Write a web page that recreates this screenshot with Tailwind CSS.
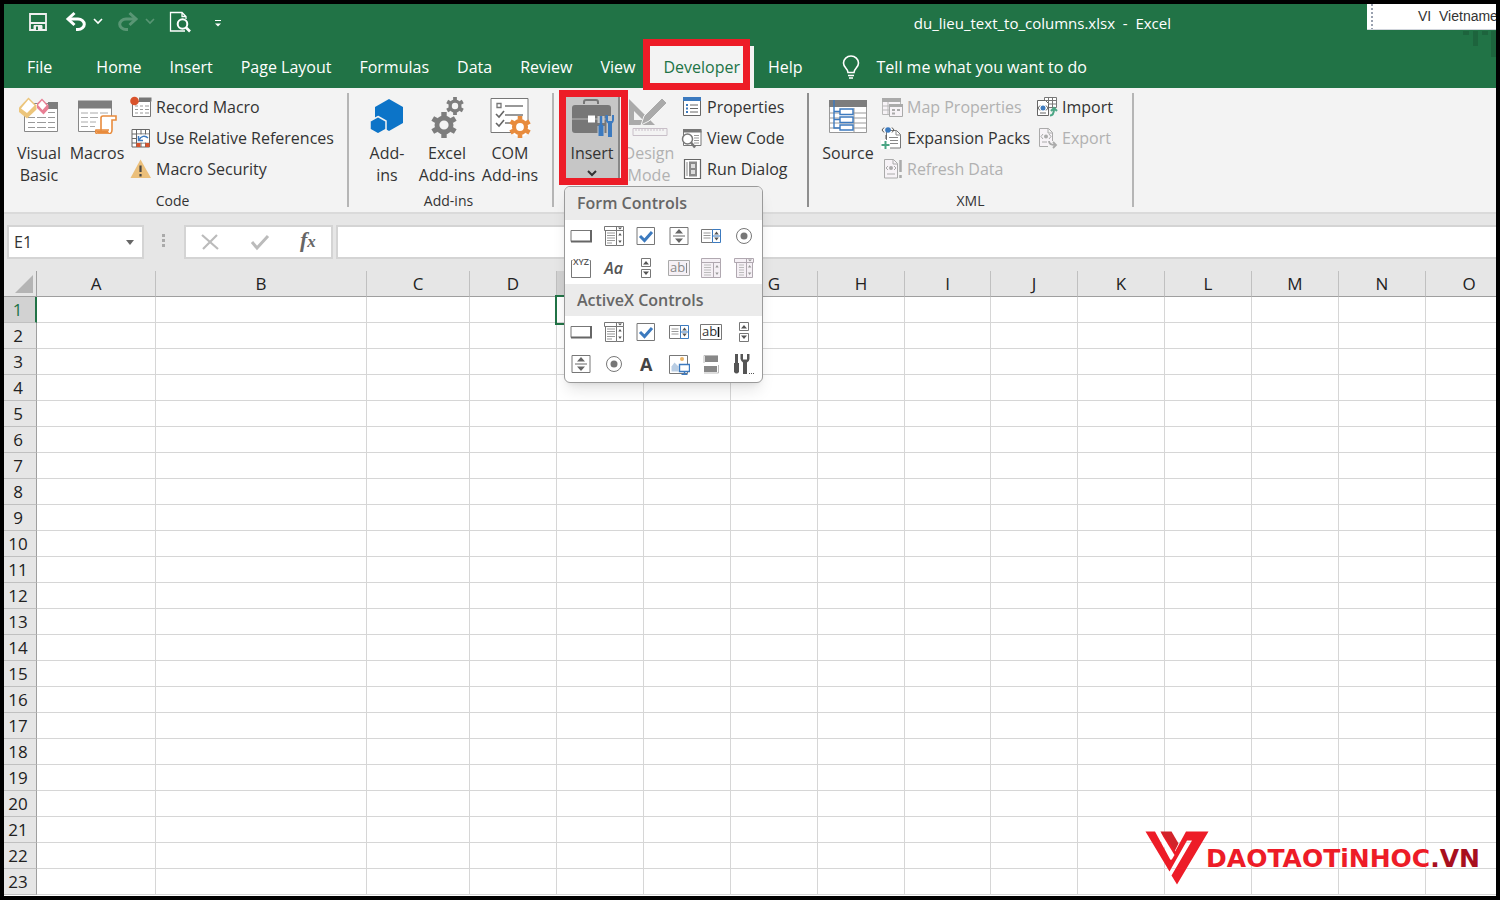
<!DOCTYPE html>
<html lang="en">

<head>
    <meta charset="UTF-8" />
    <meta name="viewport" content="width=device-width, initial-scale=1.0" />
    <title>du_lieu_text_to_columns.xlsx - Excel</title>
    <script src="https://cdn.jsdelivr.net/npm/@tailwindcss/browser@4"></script>
</head>

<body class="flex h-screen flex-col overflow-hidden border-4 border-black bg-white font-['Open_Sans','Noto_Sans',sans-serif] text-[16px] text-[#333]">

    <!-- Shared icons for the controls menu -->
    <svg class="hidden" aria-hidden="true">
        <symbol id="i-button" viewBox="0 0 22 22">
            <path d="M1 5.5h19.500v11H1z" fill="#fff" stroke="#777" />
            <path d="M1 16.500h20V5" fill="none" stroke="#666" stroke-width="2" />
        </symbol>
        <symbol id="i-combo" viewBox="0 0 22 22">
            <path d="M2.500 5.500h11v15h-11z" fill="#fff" stroke="#777" />
            <path d="M1.500 1.500h19v4h-19z" fill="#fff" stroke="#777" />
            <path d="M13.500 5.500h7v15h-7zM13.500 1.500v4" fill="#fff" stroke="#777" />
            <path d="M4 8h8M4 10.500h8M4 13h8M4 15.500h8M4 18h5" stroke="#999" />
            <path d="M15 2.500h4l-2 2zM15.300 10.500h3.400L17 8zM15.300 15.500h3.400L17 18z" fill="#555" />
        </symbol>
        <symbol id="i-check" viewBox="0 0 22 22">
            <path d="M2 2.500h17.500v17H2z" fill="#fff" stroke="#777" />
            <path d="M5 11l4.500 4.500L17 7" fill="none" stroke="#3c7abf" stroke-width="3" />
        </symbol>
        <symbol id="i-spin" viewBox="0 0 22 22">
            <path d="M2 2.500h18v17H2z" fill="#fff" stroke="#777" />
            <path d="M5 11h12" stroke="#666" />
            <path d="M7 8.500h8l-4-4.500zM7 13.500h8l-4 4.500z" fill="#666" />
        </symbol>
        <symbol id="i-list" viewBox="0 0 22 22">
            <path d="M1.500 4.500h12v13h-12z" fill="#fff" stroke="#777" />
            <path d="M3.500 8h7M3.500 10.500h7M3.500 13h7" stroke="#999" />
            <path d="M12.500 4.500h8v13h-8zM12.500 11h8" fill="#fff" stroke="#3c7abf" />
            <path d="M14.200 9.500h4.600L16.500 6.500zM14.200 12.500h4.600L16.500 15.500z" fill="#555" />
        </symbol>
        <symbol id="i-radio" viewBox="0 0 22 22">
            <circle cx="11" cy="11" r="7.500" fill="#fff" stroke="#777" />
            <circle cx="11" cy="11" r="3.500" fill="#777" />
        </symbol>
        <symbol id="i-scroll" viewBox="0 0 22 22">
            <path d="M6.500 1.500h9v8h-9zM6.500 12.500h9v8h-9z" fill="#fff" stroke="#777" />
            <path d="M8 7.500h6L11 4zM8 14.500h6L11 18z" fill="#555" />
        </symbol>
        <symbol id="i-gear" viewBox="-12 -12 24 24">
            <circle r="6.500" fill="none" stroke="currentColor" stroke-width="4.500" />
            <path d="M0-12v4M0 12v-4M-10.400-6l3.500 2M10.400-6l-3.500 2M-10.400 6l3.500-2M10.400 6l-3.500-2" stroke="currentColor" stroke-width="5" />
        </symbol>
    </svg>

    <!-- Title bar and tabs -->
    <header class="relative shrink-0 bg-[#217346] text-white">
        <svg class="absolute top-[27px] right-0 h-[27px] w-9" viewBox="0 0 36 27" fill="#1d643d">
            <path d="M3 0h6v4H3zM13 0h5v15h-5zM22 0h6v4h-6zM31 0h5v26h-5z" />
        </svg>
        <div class="flex h-[42px] items-start">
            <div class="flex h-9 items-center pl-6">
                <button aria-label="Save">
                    <svg class="h-5 w-5" viewBox="0 0 20 20" fill="none" stroke="#f0f0f0" stroke-width="1.800">
                        <path d="M2 2h16v16H2zM2 11h16" />
                        <path d="M6 13.500h8V18H6z" fill="#f0f0f0" stroke-width="1" />
                        <path d="M8 14.500v3.500h2v-3.500z" fill="#217346" stroke="none" />
                    </svg>
                </button>
                <button class="ml-4 flex items-center gap-1" aria-label="Undo">
                    <svg class="h-6 w-6" viewBox="0 0 24 24" fill="none" stroke="#fff" stroke-width="3">
                        <path d="M4 9h10a6 5 0 0 1 0 10.500h-2" />
                        <path d="M10.500 3L4 9l6.500 6" />
                    </svg>
                    <svg class="h-2 w-3" viewBox="0 0 12 8" fill="none" stroke="#fff" stroke-width="1.600"><path d="M2 1l4 4 4-4" /></svg>
                </button>
                <button class="ml-3 flex items-center gap-1 opacity-25" aria-label="Redo" disabled>
                    <svg class="h-6 w-6" viewBox="0 0 24 24" fill="none" stroke="#fff" stroke-width="3">
                        <path d="M20 9H10a6 5 0 0 0 0 10.500h2" />
                        <path d="M13.500 3L20 9l-6.500 6" />
                    </svg>
                    <svg class="h-2 w-3" viewBox="0 0 12 8" fill="none" stroke="#fff" stroke-width="1.600"><path d="M2 1l4 4 4-4" /></svg>
                </button>
                <button class="ml-3" aria-label="Print Preview">
                    <svg class="h-6 w-6" viewBox="0 0 24 24" fill="none" stroke="#fff" stroke-width="1.300">
                        <path d="M17 21H2.500V2.500H14l4 4V9M14 2.500v4h4" />
                        <circle cx="14.500" cy="14" r="4.800" fill="#217346" stroke-width="2" />
                        <path d="M18 17.500l4 4" stroke-width="2.600" />
                    </svg>
                </button>
                <button class="ml-5" aria-label="Customize Quick Access Toolbar">
                    <svg class="h-3 w-3" viewBox="0 0 12 12"><path d="M3 4.500h6" stroke="#fff" /><path d="M3 7.500h6L6 10.500z" fill="#fff" /></svg>
                </button>
            </div>
            <h1 class="mr-[196px] ml-auto flex h-[38px] items-center text-[15px] whitespace-pre">du_lieu_text_to_columns.xlsx  -  Excel</h1>
            <div class="z-10 flex h-[26px] w-[129px] shrink-0 items-center overflow-hidden border-b border-gray-300 bg-white font-['Liberation_Sans',sans-serif] text-[14px] whitespace-pre text-[#333]">
                <span class="ml-1 h-[26px] border-l-2 border-dotted border-gray-400"></span>
                <span class="ml-[45px]">VI  Vietname</span>
            </div>
        </div>
        <nav class="flex h-[42px] pl-[9px]">
            <button class="mr-4 px-[14px]">File</button>
            <button class="px-[14px]">Home</button>
            <button class="px-[14px]">Insert</button>
            <button class="px-[14px]">Page Layout</button>
            <button class="px-[14px]">Formulas</button>
            <button class="px-[14px]">Data</button>
            <button class="px-[14px]">Review</button>
            <button class="px-[14px]">View</button>
            <button class="relative bg-[#f3f3f3] px-[14px] text-[#217346]">Developer
                <span class="absolute -top-[7px] right-1 -left-[6px] h-[51px] border-[7px] border-[#ed1c27]"></span>
            </button>
            <button class="px-[14px]">Help</button>
            <button class="ml-6 flex items-center gap-4">
                <svg class="h-6 w-5" viewBox="0 0 20 24" fill="none" stroke="#fff" stroke-width="1.600">
                    <path d="M7 17.500c0-4-4.500-4.500-4.500-9.500a7.500 7 0 0 1 15 0c0 5-4.500 5.500-4.500 9.500zM7 20.500h6M8 23h4" />
                </svg>
                Tell me what you want to do
            </button>
        </nav>
    </header>

    <!-- Ribbon -->
    <section class="flex h-[126px] shrink-0 border-b-2 border-[#dadada] bg-[#f3f3f3] pt-[5px] pb-[5px] leading-[22px]">
        <div class="flex w-[345px] flex-col border-r-2 border-[#b5b5b5]">
            <div class="flex h-[101px] shrink-0 pl-[5px]">
                <button class="flex w-[60px] flex-col items-center justify-start pt-1">
                    <svg class="mb-2 h-[37px] w-[42px] shrink-0" viewBox="0 0 42 37">
                        <path d="M6.500 6.500h33v28h-33z" fill="#fff" stroke="#888" />
                        <path d="M30 5h10v7H30z" fill="#7d7d7d" />
                        <path d="M10 20.500h7m2 0h9m2 0h7M10 25.500h7m2 0h9m2 0h7M10 30.500h7m2 0h9m2 0h7M30 15.500h7" stroke="#999" />
                        <path d="M1 10.500L10.500.500 18.500 8.500v4L9 21.500 1 15z" fill="#ecc57b" />
                        <path d="M10.500 2.500l6 6L9 16l-6-4.500z" fill="#fff" />
                        <path d="M19 6.500L24 1.500l6.500 7v3.500L25.500 17.500 19 11z" fill="#e87f94" />
                        <path d="M24 3.500l4.500 5-4 4.500-4.500-5z" fill="#fff" />
                    </svg>
                    Visual<br>Basic
                </button>
                <button class="flex w-[56px] flex-col items-center justify-start pt-1">
                    <svg class="mb-2 h-[37px] w-[42px] shrink-0" viewBox="0 0 42 37">
                        <path d="M2.500 5.500h33v29h-33z" fill="#fff" stroke="#888" />
                        <path d="M2 3.500h34v8H2z" fill="#7d7d7d" />
                        <path d="M5 16h7m2 0h8m2 0h8M5 20.500h7m2 0h8M5 25h7m2 0h6M5 29.500h7m2 0h5" stroke="#aaa" />
                        <path d="M25 34V21q0-2 2-2h13v4h-4v10q0 4-4 4H22q-3 0-2-4h13" fill="#fff" stroke="#e88b3c" stroke-width="1.600" />
                        <path d="M20 33.500h12q0 2 2 3H22q-2-1-2-3z" fill="#e88b3c" />
                    </svg>
                    Macros
                </button>
                <div class="ml-[5px] flex flex-col items-start">
                    <button class="flex h-[31px] items-center gap-1 pb-1">
                        <svg class="h-[22px] w-[22px]" viewBox="0 0 22 22">
                            <path d="M2.500 5.500h18v15h-18z" fill="#fff" stroke="#777" />
                            <path d="M9 1.500h12.500v4H9z" fill="#777" />
                            <path d="M5 10h3m2 0h3m2 0h4M5 13.500h3m2 0h3m2 0h4M5 17h3m2 0h3m2 0h4" stroke="#999" />
                            <circle cx="4.500" cy="5" r="4.300" fill="#d9532c" />
                        </svg>
                        Record Macro
                    </button>
                    <button class="flex h-[31px] items-center gap-1 pb-1">
                        <svg class="h-[22px] w-[22px]" viewBox="0 0 22 22">
                            <path d="M2 2.500h17.500v17.500H2zM2 7h17.500M2 11.500h17.500M2 16h17.500M6.500 2v18M11 2v18M15.500 2v18" fill="#fff" stroke="#666" />
                            <path d="M7 7.500h12v8H7z" fill="#fff" />
                            <path d="M8.500 9v4.500H13M9 13c2-4 6-5 9-2" fill="none" stroke="#3c7abf" stroke-width="1.500" />
                            <path d="M6.500 16h4v4h-4zM15.500 16h4v4h-4z" fill="#d9532c" />
                        </svg>
                        Use Relative References
                    </button>
                    <button class="flex h-[31px] items-center gap-1 pb-1">
                        <svg class="h-[22px] w-[22px]" viewBox="0 0 22 22">
                            <path d="M10.500 1.500L21 20H.500z" fill="#ebbf7a" />
                            <path d="M10.500 7.500v6.500m0 2v2.500" stroke="#444" stroke-width="2.200" />
                        </svg>
                        Macro Security
                    </button>
                </div>
            </div>
            <p class="pr-[6px] text-center text-[14px] leading-[14px]">Code</p>
        </div>

        <div class="flex w-[205px] flex-col border-r-2 border-[#b5b5b5]">
            <div class="flex h-[101px] shrink-0 pl-[5px]">
                <button class="flex w-[66px] flex-col items-center justify-start pt-1">
                    <svg class="mb-2 h-[37px] w-[38px] shrink-0" viewBox="0 0 38 37">
                        <path d="M21 2l14 8v16l-14 8-14-8V10z" fill="#0c74c8" />
                        <path d="M10 19.500l8 4.500v8.500l-8 4.500-8-4.500V24z" fill="#0c74c8" stroke="#f3f3f3" stroke-width="1.500" />
                    </svg>
                    Add-<br>ins
                </button>
                <button class="flex w-[54px] flex-col items-center justify-start pt-1 whitespace-nowrap">
                    <svg class="mb-1 h-[41px] w-[38px] shrink-0 text-[#7d7d7d]" viewBox="0 0 38 41">
                        <use href="#i-gear" x="3" y="15" width="26" height="26" />
                        <use href="#i-gear" x="18" y="0" width="18" height="18" />
                    </svg>
                    Excel<br>Add-ins
                </button>
                <button class="flex w-[72px] flex-col items-center justify-start pt-1 whitespace-nowrap">
                    <svg class="mb-1 h-[41px] w-[42px] shrink-0 text-[#e88b3c]" viewBox="0 0 42 41">
                        <path d="M2 1.500h37v34H2z" fill="#fff" stroke="#777" />
                        <path d="M8 6.500h4v4H8zM16 9h18M16 18h18M16 26h6" fill="none" stroke="#777" stroke-width="1.300" />
                        <path d="M7 17l3 3 5-6M7 26l3 3 5-6" fill="none" stroke="#666" stroke-width="1.600" />
                        <circle cx="31" cy="30" r="10" fill="#fff" />
                        <use href="#i-gear" x="20" y="19" width="22" height="22" />
                    </svg>
                    COM<br>Add-ins
                </button>
            </div>
            <p class="pr-1 text-center text-[14px] leading-[14px]">Add-ins</p>
        </div>

        <div class="flex w-[255px] flex-col border-r-2 border-[#8e8e8e]">
            <div class="flex h-[101px] shrink-0 pl-3">
                <div class="relative z-10">
                    <button class="flex h-[88px] w-[54px] flex-col items-center justify-start border-r-2 border-[#888] bg-[#c6c6c6] pt-1">
                        <svg class="mb-2 h-[41px] w-[44px] shrink-0" viewBox="0 0 44 41">
                            <path d="M14 7V5q0-2 2-2h10q2 0 2 2v2" fill="none" stroke="#777" stroke-width="2" />
                            <rect x="2" y="8" width="39" height="28" rx="3" fill="#777" />
                            <path d="M2 22h39" stroke="#bbb" />
                            <path d="M18 18.500h7v7h-7z" fill="#fff" />
                            <path d="M31 19v7m0 3v11" stroke="#c6c6c6" stroke-width="7" />
                            <path d="M40 19v21" stroke="#c6c6c6" stroke-width="7" />
                            <path d="M31 19v9" stroke="#3c7abf" stroke-width="2.500" />
                            <path d="M31 28v11" stroke="#3c7abf" stroke-width="5" />
                            <path d="M35.500 18v5q1 3 2.500 3.500V40h4V26.500Q43.500 26 44 23v-5h-2v6h-4v-6z" fill="#3c7abf" />
                        </svg>
                        <span class="-mt-1 leading-[22px]">Insert</span>
                        <svg class="mt-[6px] h-[7px] w-[10px] shrink-0" viewBox="0 0 10 7" fill="none" stroke="#333" stroke-width="2"><path d="M1 1l4 4 4-4" /></svg>
                    </button>
                    <span class="absolute -top-[3px] -left-[7px] h-[95px] w-[69px] border-[7px] border-[#ed1c27]"></span>

                    <!-- Controls menu -->
                    <div class="absolute top-[93px] -left-[2px] w-[199px] overflow-hidden rounded-md border border-[#9a9a9a] bg-white pb-[2px] shadow-lg">
                        <h2 class="flex h-[33px] items-center bg-[#ebebeb] pb-[1px] pl-3 text-[16px] font-semibold text-[#666]">Form Controls</h2>
                        <div class="grid auto-rows-[32px] grid-cols-6 place-items-center pr-[2px]">
                            <button aria-label="Button"><svg class="h-[22px] w-[22px]"><use href="#i-button" /></svg></button>
                            <button aria-label="Combo Box"><svg class="h-[22px] w-[22px]"><use href="#i-combo" /></svg></button>
                            <button aria-label="Check Box"><svg class="h-[22px] w-[22px]"><use href="#i-check" /></svg></button>
                            <button aria-label="Spin Button"><svg class="h-[22px] w-[22px]"><use href="#i-spin" /></svg></button>
                            <button aria-label="List Box"><svg class="h-[22px] w-[22px]"><use href="#i-list" /></svg></button>
                            <button aria-label="Option Button"><svg class="h-[22px] w-[22px]"><use href="#i-radio" /></svg></button>
                            <button aria-label="Group Box">
                                <svg class="h-6 w-[22px]" viewBox="0 0 22 24">
                                    <path d="M2.500 4.500h-1v17h19v-17h-1" fill="none" stroke="#777" />
                                    <text x="11" y="9" text-anchor="middle" font-size="9" font-weight="600" fill="#555">XYZ</text>
                                </svg>
                            </button>
                            <button aria-label="Label" class="text-[16px] font-semibold text-[#555] italic">Aa</button>
                            <button aria-label="Scroll Bar"><svg class="h-[22px] w-[22px]"><use href="#i-scroll" /></svg></button>
                            <button aria-label="Text Field" disabled>
                                <svg class="h-[22px] w-[22px]" viewBox="0 0 22 22">
                                    <path d="M.500 3.500h21v15H.500z" fill="#f5f0f5" stroke="#aaa" />
                                    <text x="2" y="15" font-size="13" fill="#888">ab</text>
                                    <path d="M18.500 6v10" stroke="#888" />
                                </svg>
                            </button>
                            <button aria-label="Combo List Edit" disabled>
                                <svg class="h-[22px] w-[22px]" viewBox="0 0 22 22">
                                    <path d="M1.500 1.500h19v19h-19zM1.500 5.500h19M13.500 5.500v15" fill="#f5f0f5" stroke="#b0a8b0" />
                                    <path d="M4 8h7M4 10.500h7M4 13h7M4 15.500h7M4 18h7" stroke="#bbb" />
                                    <path d="M15.300 10.500h3.400L17 8zM15.300 15.500h3.400L17 18z" fill="#999" />
                                </svg>
                            </button>
                            <button aria-label="Combo Drop-Down Edit" disabled>
                                <svg class="h-[22px] w-[22px]" viewBox="0 0 22 22">
                                    <path d="M3.500 5.500h10v15h-10zM13.500 5.500h6v15h-6zM1.500 1.500h19v4h-19zM13.500 1.500v4" fill="#f5f0f5" stroke="#b0a8b0" />
                                    <path d="M6 8h5M6 10.500h5M6 13h5M6 15.500h5M6 18h5" stroke="#bbb" />
                                    <path d="M15 2.500h4l-2 2zM15 10.500h3.400L16.500 8zM15 15.500h3.400L16.500 18z" fill="#999" />
                                </svg>
                            </button>
                        </div>
                        <h2 class="flex h-8 items-center bg-[#ebebeb] pl-3 text-[16px] font-semibold text-[#666]">ActiveX Controls</h2>
                        <div class="grid auto-rows-[32px] grid-cols-6 place-items-center pr-[2px]">
                            <button aria-label="Command Button"><svg class="h-[22px] w-[22px]"><use href="#i-button" /></svg></button>
                            <button aria-label="Combo Box (ActiveX)"><svg class="h-[22px] w-[22px]"><use href="#i-combo" /></svg></button>
                            <button aria-label="Check Box (ActiveX)"><svg class="h-[22px] w-[22px]"><use href="#i-check" /></svg></button>
                            <button aria-label="List Box (ActiveX)"><svg class="h-[22px] w-[22px]"><use href="#i-list" /></svg></button>
                            <button aria-label="Text Box">
                                <svg class="h-[22px] w-[22px]" viewBox="0 0 22 22">
                                    <path d="M.500 3.500h21v15H.500z" fill="#fff" stroke="#777" />
                                    <text x="2" y="15" font-size="13" fill="#333">ab</text>
                                    <path d="M18.500 6v10" stroke="#111" stroke-width="1.500" />
                                </svg>
                            </button>
                            <button aria-label="Scroll Bar (ActiveX)"><svg class="h-[22px] w-[22px]"><use href="#i-scroll" /></svg></button>
                            <button aria-label="Spin Button (ActiveX)"><svg class="h-[22px] w-[22px]"><use href="#i-spin" /></svg></button>
                            <button aria-label="Option Button (ActiveX)"><svg class="h-[22px] w-[22px]"><use href="#i-radio" /></svg></button>
                            <button aria-label="Label (ActiveX)" class="text-[18px] font-bold text-[#444]">A</button>
                            <button aria-label="Image">
                                <svg class="h-[22px] w-[22px]" viewBox="0 0 22 22">
                                    <path d="M1.500 2.500h18v18h-18z" fill="#fff" stroke="#777" />
                                    <path d="M3.500 18.500v-5l3-4 4 4v5z" fill="#b9cde3" />
                                    <circle cx="14" cy="6" r="2" fill="#ecb566" />
                                    <path d="M11.500 11.500h10v7h-10zM16.500 18.500v3M13.500 21.500h6" fill="#fff" stroke="#3c7abf" stroke-width="1.400" />
                                </svg>
                            </button>
                            <button aria-label="Toggle Button">
                                <svg class="h-[22px] w-[22px]" viewBox="0 0 22 22">
                                    <path d="M4 2h14v8H4zM4 12.500h14v8H4z" fill="#fff" />
                                    <path d="M5 3h13v6H5zM4 13h13v6H4z" fill="#888" />
                                    <path d="M4 10V2.500h14M18.500 12v8H4" fill="none" stroke="#bbb" />
                                </svg>
                            </button>
                            <button aria-label="More Controls">
                                <svg class="h-[22px] w-[22px]" viewBox="0 0 22 22" fill="#555">
                                    <path d="M2 1h3v9h1v9q-2.500 3-5 0v-9h1zM7.500 1v5q1 3 2.500 3.500V21h4V9.500Q16 9 16.500 6V1H14v5.500h-4V1z" />
                                    <path d="M16 20h1v1h-1zM18 20h1v1h-1zM20 20h1v1h-1z" />
                                </svg>
                            </button>
                        </div>
                    </div>
                </div>
                <button class="flex w-[58px] flex-col items-center justify-start pt-1 text-[#b1b1b1]" disabled>
                    <svg class="mb-1 h-[41px] w-[42px] shrink-0" viewBox="0 0 42 41">
                        <path d="M1 2v26h26zM6 14l9 9H6z" fill="#aaa" fill-rule="evenodd" />
                        <path d="M13 28l3-9L34 1l5 5-18 18z" fill="#aaa" stroke="#f3f3f3" />
                        <path d="M5 31.500h34v7H5zM8 31v3m3-3v3m3-3v3m3-3v3m3-3v3m3-3v3m3-3v3m3-3v3m3-3v3m3-3v3" fill="none" stroke="#c8bfc8" />
                    </svg>
                    Design<br>Mode
                </button>
                <div class="ml-[3px] flex flex-col items-start">
                    <button class="flex h-[31px] items-center gap-1 pb-1">
                        <svg class="h-[22px] w-[22px]" viewBox="0 0 22 22">
                            <path d="M2.500 2.500h17v17h-17z" fill="#fff" stroke="#666" />
                            <path d="M2 1h18v4H2z" fill="#3c7abf" />
                            <path d="M9 9h8M9 12.500h8M9 16h8" stroke="#666" />
                            <path d="M5 8h2v2H5zM5 11.500h2v2H5zM5 15h2v2H5z" fill="#3c7abf" />
                        </svg>
                        Properties
                    </button>
                    <button class="flex h-[31px] items-center gap-1 pb-1">
                        <svg class="h-[22px] w-[22px]" viewBox="0 0 22 22">
                            <path d="M2.500 3.500h17.500v15H2.500z" fill="#fff" stroke="#777" />
                            <path d="M2 2h18.500v3.500H2z" fill="#777" />
                            <path d="M13 8.500h5M13 11h5M13 13.500h5M13 16h5" stroke="#999" />
                            <circle cx="6.500" cy="12" r="5" fill="#fff" stroke="#777" stroke-width="1.500" />
                            <path d="M10 15.500l4 5" stroke="#777" stroke-width="2.500" />
                        </svg>
                        View Code
                    </button>
                    <button class="flex h-[31px] items-center gap-1 pb-1">
                        <svg class="h-[22px] w-[22px]" viewBox="0 0 22 22">
                            <path d="M3.500 1.500h16v19h-16z" fill="#fff" stroke="#666" stroke-width="1.200" />
                            <path d="M6 4v14" stroke="#888" />
                            <path d="M8 3.500h8v15H8z" fill="#8a8a8a" />
                            <path d="M10 6h4v4h-4zM10 12h4v4h-4z" fill="#ddd" />
                        </svg>
                        Run Dialog
                    </button>
                </div>
            </div>
        </div>

        <div class="flex w-[325px] flex-col border-r-2 border-[#b5b5b5]">
            <div class="flex h-[101px] shrink-0 pl-[9px]">
                <button class="flex w-[60px] flex-col items-center justify-start pt-1">
                    <svg class="mb-2 h-[37px] w-[40px] shrink-0" viewBox="0 0 40 37">
                        <path d="M1.500 4.500h37v31h-37zM1.500 16h37M1.500 21h37M1.500 26h37M1.500 31h37M26 11v24" fill="#fff" stroke="#999" />
                        <path d="M1 3h38v7H1z" fill="#7d7d7d" />
                        <path d="M6 3v28h6M6 14.500h6M6 22.500h6" fill="none" stroke="#3c7abf" stroke-width="1.400" />
                        <path d="M12 12h13v5.500H12zM12 20h13v5.500H12zM12 28h13v5H12z" fill="#fff" stroke="#3c7abf" stroke-width="1.400" />
                    </svg>
                    Source
                </button>
                <div class="ml-[3px] flex flex-col items-start">
                    <button class="flex h-[31px] items-center gap-1 pb-1 text-[#b1b1b1]" disabled>
                        <svg class="h-[22px] w-[22px]" viewBox="0 0 22 22">
                            <path d="M1.500 2.500h18v16h-18zM1.500 10h8M1.500 14h8M7 6v12" fill="#f7f3f7" stroke="#b9b9b9" />
                            <path d="M1 2h19v4H1z" fill="#aaa" />
                            <path d="M8.500 8.500h13v12h-13z" fill="#f7f3f7" stroke="#aaa" />
                            <path d="M8 8h14v3H8zM11 13h3v2h-3zM16 13h3v2h-3zM11 16.500h3v2h-3z" fill="#aaa" />
                        </svg>
                        Map Properties
                    </button>
                    <button class="flex h-[31px] items-center gap-1 pb-1">
                        <svg class="h-[22px] w-[22px]" viewBox="0 0 22 22">
                            <path d="M5.500 21V3.500h10l4 4V21z" fill="#fff" stroke="#777" />
                            <path d="M15 3v5h5M8 10.500h9M8 13.500h9M8 16.500h9" fill="none" stroke="#888" />
                            <path d="M0 13h9v9H0z" fill="#fff" />
                            <path d="M4.500 14v8M.500 18h8" stroke="#4ba584" stroke-width="2" />
                            <circle cx="7" cy="3" r="2.800" fill="#3c7abf" />
                            <path d="M3 .500L1 3l2 2.500M11 .500L13 3l-2 2.500M5 8v4" fill="none" stroke="#555" />
                        </svg>
                        Expansion Packs
                    </button>
                    <button class="flex h-[31px] items-center gap-1 pb-1 text-[#b1b1b1]" disabled>
                        <svg class="h-[22px] w-[22px]" viewBox="0 0 22 22">
                            <path d="M3.500 20V1.500h9l4 4V20z" fill="#f7f3f7" stroke="#aaa" />
                            <path d="M12 1.500V6h4.500M7 8l-2 2 2 2M13 8l2 2-2 2M6 16h8" fill="none" stroke="#aaa" />
                            <circle cx="10" cy="10" r="2" fill="#aaa" />
                            <path d="M19.500 2v12m0 3v3" stroke="#aaa" stroke-width="2.500" />
                        </svg>
                        Refresh Data
                    </button>
                </div>
                <div class="ml-auto flex w-[96px] flex-col items-start">
                    <button class="flex h-[31px] items-center gap-1 pb-1">
                        <svg class="h-[22px] w-[22px]" viewBox="0 0 22 22">
                            <path d="M8.500 1.500h12v10h-12zM8.500 4.500h12M8.500 8h12M12.500 1.500v10M16.500 1.500v10" fill="#fff" stroke="#777" />
                            <path d="M1.500 4.500h8l3 3v12h-11z" fill="#fff" stroke="#666" />
                            <circle cx="7" cy="12" r="2.500" fill="#3c7abf" />
                            <path d="M4 9.500L2 12l2 2.500M10 9.500l2 2.500-2 2.500M4 17h6" fill="none" stroke="#666" />
                            <path d="M14 19.500q4 0 4-7M15 15l3-3 3 3" fill="none" stroke="#4ba584" stroke-width="2" />
                        </svg>
                        Import
                    </button>
                    <button class="flex h-[31px] items-center gap-1 pb-1 text-[#b1b1b1]" disabled>
                        <svg class="h-[22px] w-[22px]" viewBox="0 0 22 22">
                            <path d="M12 19.500H3.500v-18h9l4 4V14M12 1.500V6h4.500" fill="#f7f3f7" stroke="#aaa" />
                            <path d="M7 7L5 9.500 7 12M13 7l2 2.500-2 2.500M6 15h5" fill="none" stroke="#aaa" />
                            <circle cx="10" cy="9.500" r="2" fill="#aaa" />
                            <path d="M13 14q0 4 6 4M17 15l3 3-3 3" fill="none" stroke="#aaa" stroke-width="1.800" />
                        </svg>
                        Export
                    </button>
                </div>
            </div>
            <p class="text-center text-[14px] leading-[14px]">XML</p>
        </div>
    </section>

    <!-- Formula bar -->
    <section class="flex h-[57px] shrink-0 items-start bg-[#e6e6e6] pt-[11px] pl-[3px]">
        <div class="flex h-[34px] w-[137px] items-center border-2 border-[#d4d4d4] bg-white pr-2">
            <input class="w-full min-w-0 pl-[5px] text-[16px] outline-none" aria-label="Name Box" value="E1" />
            <svg class="h-[5px] w-2 shrink-0" viewBox="0 0 8 5"><path d="M0 0h8L4 5z" fill="#666" /></svg>
        </div>
        <svg class="mx-[18px] mt-[9px] h-4 w-1" viewBox="0 0 4 16" fill="#aaa"><path d="M0 0h3v3H0zM0 5h3v3H0zM0 10h3v3H0z" /></svg>
        <div class="flex h-[34px] w-[149px] items-center justify-around border-2 border-[#d4d4d4] bg-white">
            <button aria-label="Cancel"><svg class="h-[18px] w-[18px]" viewBox="0 0 18 18" stroke="#bbb" stroke-width="2.200"><path d="M1 2l16 14M16 2L2 16" /></svg></button>
            <button aria-label="Enter"><svg class="h-[18px] w-[20px]" viewBox="0 0 20 18" fill="none" stroke="#bbb" stroke-width="3"><path d="M2 9l5 6L18 3" /></svg></button>
            <button aria-label="Insert Function" class="pb-1 font-['Liberation_Serif',serif] text-[22px] leading-none font-bold text-[#666] italic">f<span class="text-[17px]">x</span></button>
        </div>
        <input class="ml-[3px] h-[34px] flex-1 border-2 border-r-0 border-[#d4d4d4] bg-white px-2 outline-none" aria-label="Formula Bar" />
    </section>

    <!-- Sheet -->
    <main class="relative min-h-0 flex-1 overflow-hidden">
        <table class="w-[1507px] table-fixed border-separate border-spacing-0">
            <colgroup>
                <col class="w-[33px]" />
                <col class="w-[119px]" />
                <col class="w-[211px]" />
                <col class="w-[103px]" />
                <col class="w-[87px]" />
                <col class="w-[87px]" />
                <col class="w-[87px]" />
                <col class="w-[87px]" />
                <col class="w-[87px]" />
                <col class="w-[86px]" />
                <col class="w-[87px]" />
                <col class="w-[87px]" />
                <col class="w-[87px]" />
                <col class="w-[87px]" />
                <col class="w-[87px]" />
                <col class="w-[87px]" />
            </colgroup>
            <thead>
                <tr id="columns">
                    <th class="h-[26px] border-r border-b border-[#9f9f9f] bg-[#e6e6e6] p-0" aria-label="Select all">
                        <svg class="ml-auto mr-[3px] h-[18px] w-[18px]" viewBox="0 0 18 18"><path d="M18 0v18H0z" fill="#b4b4b4" /></svg>
                    </th>
                </tr>
            </thead>
            <tbody id="rows"></tbody>
        </table>

        <!-- Watermark logo -->
        <div class="absolute right-4 bottom-[11px] flex items-center">
            <svg class="h-[54px] w-[64px]" viewBox="0 0 64 54">
                <path d="M15.500.500h11l7 12-5 10z" fill="#d2232a" />
                <path d="M.500.500H10L25.500 29 41 .500h22.500L32 53.500 26.500 44.500 47 9.500h-5L24.500 40.500z" fill="#ed1c27" />
                <path d="M15.500.500l9 11 6.500 10-4 6z" fill="#ed1c27" />
                <path d="M11 .500h4L29.500 24l-3 5z" fill="#fff" />
            </svg>
            <span class="-ml-[3px] font-['DejaVu_Sans',sans-serif] text-[25px] leading-none font-bold text-[#ed1c27]">DAOTAOTiNHOC<span class="text-[#a80f1e]">.VN</span></span>
        </div>
    </main>

    <script>
        const letters = "ABCDEFGHIJKLMNO".split("");
        const columns = document.getElementById("columns");
        const rows = document.getElementById("rows");

        letters.forEach((letter) => {
            const th = document.createElement("th");
            th.scope = "col";
            th.className = "h-[26px] border-r border-b border-r-[#c0c0c0] border-b-[#9f9f9f] p-0 text-[17px] leading-[25px] font-normal text-[#222] "
                + (letter === "E" ? "bg-[#d2d2d2]" : "bg-[#e6e6e6]");
            th.textContent = letter;
            columns.appendChild(th);
        });

        for (let n = 1; n <= 23; n++) {
            const tr = document.createElement("tr");
            const th = document.createElement("th");
            th.scope = "row";
            th.className = "h-[26px] border-b border-b-[#c0c0c0] p-0 pr-1 text-[17px] leading-[25px] font-normal "
                + (n === 1 ? "border-r-2 border-r-[#217346] bg-[#d2d2d2] text-[#217346]" : "border-r border-r-[#9f9f9f] bg-[#e6e6e6] text-[#222]");
            th.textContent = n;
            tr.appendChild(th);
            letters.forEach((letter) => {
                const td = document.createElement("td");
                td.className = "border-r border-b border-[#d6d6d6] p-0"
                    + (n === 1 && letter === "E" ? " outline-2 outline-[#217346]" : "");
                tr.appendChild(td);
            });
            rows.appendChild(tr);
        }
    </script>
</body>

</html>
